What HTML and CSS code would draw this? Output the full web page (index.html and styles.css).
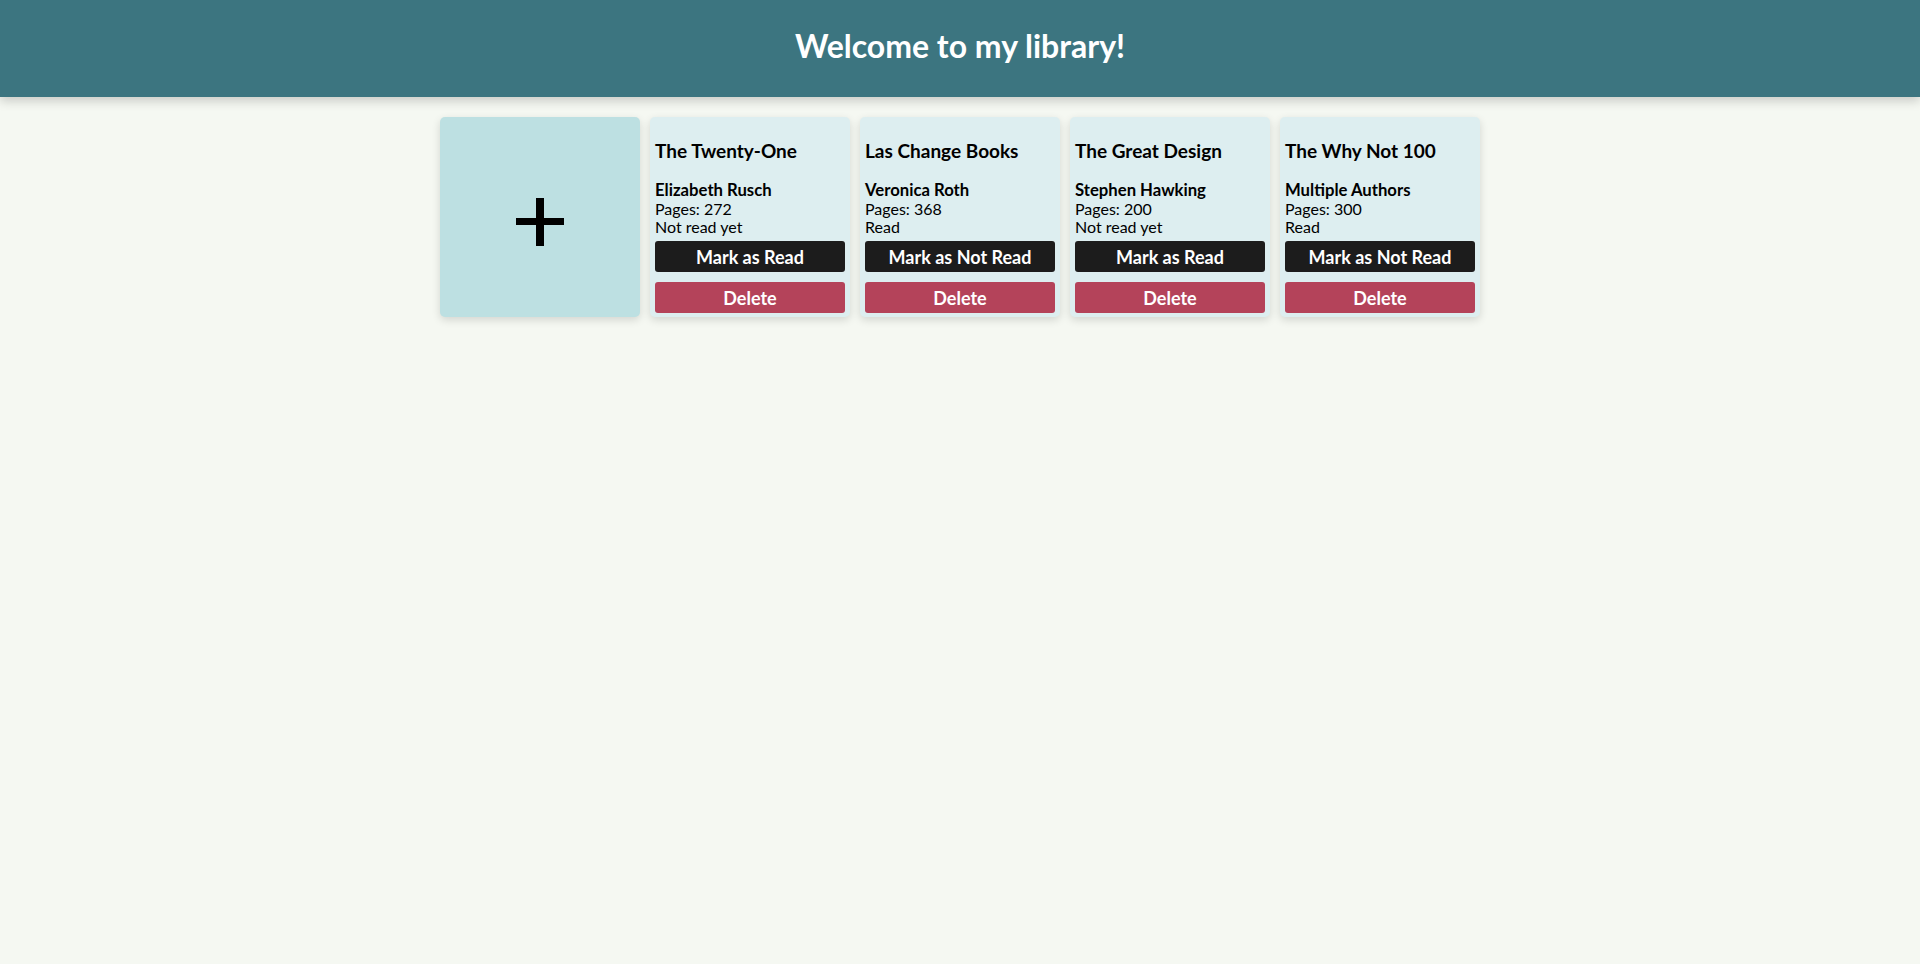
FILE: index.html
```html
<!DOCTYPE html>
<html lang="en">
<head>
<meta charset="utf-8">
<title>Library</title>
<link rel="stylesheet" href="styles.css">
</head>
<body>
<header class="site-header">
  <h1 class="site-title">Welcome to my library!</h1>
</header>
<main class="library">
  <button class="card add-card" aria-label="Add book">
    <svg class="plus" width="48" height="48" viewBox="0 0 48 48"><rect x="20" y="0" width="8" height="48" fill="#000"/><rect x="0" y="20" width="48" height="7" fill="#000"/></svg>
  </button>
  <div class="card book">
    <h3 class="book-title">The Twenty-One</h3>
    <p class="book-author">Elizabeth Rusch</p>
    <p class="book-line">Pages: 272</p>
    <p class="book-line">Not read yet</p>
    <button class="btn btn-toggle">Mark as Read</button>
    <button class="btn btn-delete">Delete</button>
  </div>
  <div class="card book">
    <h3 class="book-title">Las Change Books</h3>
    <p class="book-author">Veronica Roth</p>
    <p class="book-line">Pages: 368</p>
    <p class="book-line">Read</p>
    <button class="btn btn-toggle">Mark as Not Read</button>
    <button class="btn btn-delete">Delete</button>
  </div>
  <div class="card book">
    <h3 class="book-title">The Great Design</h3>
    <p class="book-author">Stephen Hawking</p>
    <p class="book-line">Pages: 200</p>
    <p class="book-line">Not read yet</p>
    <button class="btn btn-toggle">Mark as Read</button>
    <button class="btn btn-delete">Delete</button>
  </div>
  <div class="card book">
    <h3 class="book-title">The Why Not 100</h3>
    <p class="book-author">Multiple Authors</p>
    <p class="book-line">Pages: 300</p>
    <p class="book-line">Read</p>
    <button class="btn btn-toggle">Mark as Not Read</button>
    <button class="btn btn-delete">Delete</button>
  </div>
</main>
</body>
</html>
```
FILE: styles.css
```css
* { box-sizing: border-box; }
html, body { margin: 0; padding: 0; }
body {
  background: #f5f8f2;
  font-family: Lato, "Liberation Sans", sans-serif;
  color: #000;
  min-height: 100vh;
}
.site-header {
  height: 97px;
  background: #3c7580;
  box-shadow: 0 4px 10px rgba(0, 0, 0, 0.18);
  padding-top: 27px;
  text-align: center;
  position: relative;
  z-index: 1;
}
.site-title {
  margin: 0;
  color: #fff;
  font-size: 32px;
  line-height: 38px;
  font-weight: 700;
}
.library {
  display: flex;
  justify-content: center;
  gap: 10px;
  margin-top: 20px;
}
.card {
  width: 200px;
  height: 200px;
  border-radius: 5px;
  box-shadow: 0 3px 8px rgba(0, 0, 0, 0.14);
}
.add-card {
  border: none;
  background: #bde0e2;
  display: flex;
  align-items: center;
  justify-content: center;
  padding: 9px 0 0 0;
  cursor: pointer;
}
.plus { display: block; }
.book {
  background: #ddeef0;
  padding: 5px 5px 4px;
  display: flex;
  flex-direction: column;
}
.book-title {
  margin: 17px 0 18px;
  font-size: 19px;
  line-height: 24px;
  font-weight: 700;
}
.book-author, .book-line {
  margin: 0;
  font-size: 16px;
  line-height: 18.5px;
}
.book-author { font-weight: 700; font-size: 16.7px; }
.btn {
  border: none;
  width: 190px;
  height: 31px;
  border-radius: 3px;
  color: #fff;
  font-family: inherit;
  font-size: 18px;
  font-weight: 700;
  padding: 0;
  margin-bottom: 0;
  cursor: pointer;
}
.btn-toggle { background: #1c1c1c; margin-top: auto; }
.btn-delete { background: #b4435a; margin-top: 10px; }
```
